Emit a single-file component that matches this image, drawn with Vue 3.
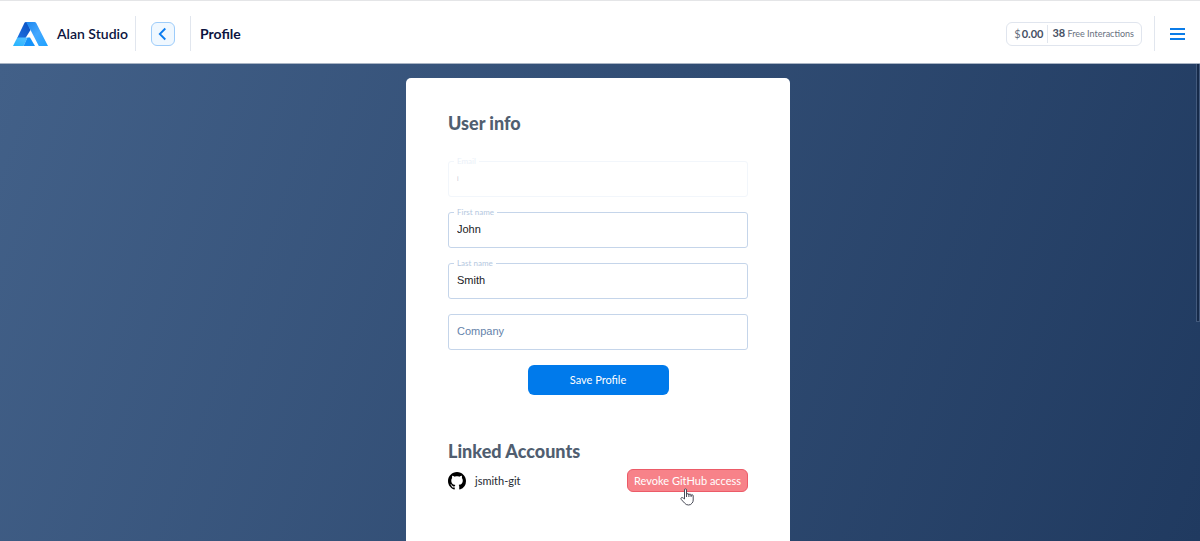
<script setup>
import { reactive } from 'vue'

const fields = reactive([
  { id: 'email', label: 'Email', value: 'i', disabled: true },
  { id: 'first-name', label: 'First name', value: 'John' },
  { id: 'last-name', label: 'Last name', value: 'Smith' },
  { id: 'company', label: 'Company', value: '' },
])
</script>

<template>
  <div class="page">
    <header class="topbar">
      <a class="brand" href="#">
        <svg class="logo" viewBox="0 0 35 24" aria-hidden="true">
          <defs>
            <linearGradient id="logo-left" x1="0" y1="1" x2="1" y2="0">
              <stop offset="0" stop-color="#1b6fe0" />
              <stop offset="1" stop-color="#0b4fc0" />
            </linearGradient>
            <linearGradient id="logo-right" x1="0" y1="0" x2="1" y2="1">
              <stop offset="0" stop-color="#1c86ee" />
              <stop offset="0.5" stop-color="#44a8ff" />
              <stop offset="1" stop-color="#1ea2ff" />
            </linearGradient>
            <linearGradient id="logo-foot" x1="0" y1="1" x2="1" y2="0">
              <stop offset="0" stop-color="#22b4ff" />
              <stop offset="1" stop-color="#58c0ff" />
            </linearGradient>
          </defs>
          <path d="M11.5 .8Q12 0 13 0H14L17.5 8L12.5 16H4.2Z" fill="url(#logo-left)" />
          <path d="M13 0H21.5Q22.6 0 23.2 1L35 24H25.8L17.5 8Z" fill="url(#logo-right)" />
          <path d="M4.3 15.5H14.5L10.5 24H0Z" fill="url(#logo-foot)" />
          <path d="M14.5 15.5H17L22 24H10.5Z" fill="#1592fa" />
        </svg>
        <span>Alan Studio</span>
      </a>
      <span class="rule"></span>
      <button class="back" type="button" aria-label="Back">
        <svg viewBox="0 0 24 24" aria-hidden="true"><path d="M14.5 6L8.500 12l6 6" /></svg>
      </button>
      <span class="rule"></span>
      <h1>Profile</h1>
      <div class="balance">
        <span class="money"><span>$</span><b>0.00</b></span>
        <span class="free"><b>38</b> Free Interactions</span>
      </div>
      <span class="rule"></span>
      <button class="menu" type="button" aria-label="Menu">
        <svg viewBox="0 0 16 14" aria-hidden="true"><path d="M0 2H15M0 7H15M0 12H15" /></svg>
      </button>
    </header>

    <main>
      <section class="card">
        <h2>User info</h2>
        <form @submit.prevent>
          <div v-for="f in fields" :key="f.id" class="field" :class="{ off: f.disabled, filled: f.value }">
            <input :id="f.id" v-model="f.value" type="text" :disabled="f.disabled" />
            <label :for="f.id">{{ f.label }}</label>
          </div>
          <button class="save" type="submit">Save Profile</button>
        </form>
        <h2>Linked Accounts</h2>
        <div class="account">
          <svg class="github" viewBox="0 0 16 16" aria-hidden="true">
            <path d="M8 0C3.580 0 0 3.580 0 8c0 3.540 2.290 6.530 5.470 7.590.4.070.55-.17.55-.38 0-.19-.01-.82-.01-1.490-2.010.37-2.530-.49-2.690-.94-.09-.23-.48-.94-.82-1.130-.28-.15-.68-.52-.01-.53.63-.01 1.080.58 1.230.82.72 1.210 1.870.87 2.330.66.07-.52.28-.87.51-1.070-1.780-.2-3.640-.89-3.640-3.950 0-.87.31-1.590.82-2.150-.08-.2-.36-1.020.08-2.120 0 0 .67-.21 2.200.82.64-.18 1.320-.27 2-.27s1.360.09 2 .27c1.530-1.040 2.200-.82 2.200-.82.44 1.100.16 1.920.08 2.120.51.56.82 1.270.82 2.150 0 3.070-1.870 3.750-3.650 3.950.29.25.54.73.54 1.480 0 1.070-.01 1.930-.01 2.200 0 .21.15.46.55.38A8.010 8.010 0 0 0 16 8c0-4.420-3.580-8-8-8Z" />
          </svg>
          <span>jsmith-git</span>
          <div class="revoke-wrap">
            <button class="revoke" type="button">Revoke GitHub access</button>
            <svg class="pointer" viewBox="0 0 14 18" aria-hidden="true">
              <path d="M4.500 11V2Q4.500 .8 5.500 .8T6.500 2V7Q6.800 5.500 7.800 5.500T8.900 7Q9.100 6 10 6T11.100 7.500Q11.300 6.700 12.200 6.700Q13.200 6.800 13.200 8V12Q13.200 14 12.200 15Q11 17 8.500 17Q6 17 4.500 15L1.300 11.500Q.5 10.300 1.400 9.700Q2.400 9.200 3.300 10.100Z" />
              <path d="M6.500 6.500V9M8.900 6.500V9M11.100 7V9" />
            </svg>
          </div>
        </div>
      </section>
      <span class="scroll-thumb"></span>
    </main>
  </div>
</template>

<style>
html,
body {
  margin: 0;
}
</style>

<style scoped>
* {
  box-sizing: border-box;
}
.page {
  display: flex;
  flex-direction: column;
  height: 100vh;
  overflow: hidden;
  font-family: Lato, 'Liberation Sans', sans-serif;
  color: #0c1440;
}
button,
input {
  font: inherit;
  margin: 0;
}
button {
  cursor: pointer;
}
.topbar {
  display: flex;
  flex: none;
  align-items: center;
  height: 64px;
  padding: 3px 14px 0 13px;
  border-top: 1px solid #e4e5e7;
  border-bottom: 1px solid #a9b4c4;
  background: #fff;
}
.brand {
  display: flex;
  align-items: center;
  gap: 9px;
  margin-right: 7px;
  color: inherit;
  font-size: 14px;
  font-weight: 600;
  text-decoration: none;
}
.logo {
  width: 35px;
  height: 24px;
}
.rule {
  width: 1px;
  height: 35px;
  background: #e1e6ee;
}
.back {
  display: flex;
  width: 24px;
  height: 24px;
  margin: 0 15px;
  padding: 0;
  border: 1px solid #9dccfa;
  border-radius: 6px;
  background: #f0f8ff;
}
.back svg {
  width: 100%;
  height: 100%;
  fill: none;
  stroke: #0b7cf0;
  stroke-width: 2;
}
h1 {
  margin: 0 auto 0 9px;
  font-size: 14px;
  font-weight: 700;
}
.balance {
  display: flex;
  align-items: center;
  height: 24px;
  margin-right: 12px;
  padding: 0 7px;
  border: 1px solid #e0e5ee;
  border-radius: 6px;
  color: #687080;
  font-size: 9px;
  line-height: 18px;
}
.balance b {
  color: #465064;
  font-size: 11px;
  font-weight: 700;
}
.money {
  display: flex;
  gap: 1px;
  padding-right: 4px;
  border-right: 1px solid #e1e6ee;
  font-size: 11px;
}
.free {
  padding: 0 0 1px 4px;
}
.menu {
  display: flex;
  margin-left: 15px;
  padding: 0;
  border: 0;
  background: none;
}
.menu svg {
  width: 16px;
  height: 14px;
  stroke: #0b7ce8;
  stroke-width: 2;
}
main {
  position: relative;
  display: flex;
  flex: 1;
  justify-content: center;
  min-height: 0;
  padding: 14px 4px 0 0;
  background: linear-gradient(110deg, #426088, #203a60);
}
.card {
  width: 384px;
  padding: 33px 42px 0;
  border-radius: 5px 5px 0 0;
  background: #fff;
}
h2 {
  margin: 0;
  color: #505e70;
  font-size: 18px;
  font-weight: 900;
  line-height: 24px;
}
form {
  display: flex;
  flex-direction: column;
  gap: 15px;
  margin: 26px 0 44px;
}
.field {
  position: relative;
  height: 36px;
}
.field input {
  width: 100%;
  height: 100%;
  padding: 0 8px 2px;
  border: 1px solid #c5d5ea;
  border-radius: 3px;
  outline: 0;
  background: #fff;
  color: #202124;
  font-family: 'Liberation Sans', Arial, sans-serif;
  font-size: 11px;
}
.field label {
  position: absolute;
  top: 10px;
  left: 9px;
  color: #6482aa;
  font-family: 'Liberation Sans', Arial, sans-serif;
  font-size: 11px;
  line-height: 14px;
}
.filled label {
  top: -5px;
  left: 6px;
  padding: 0 3px;
  background: #fff;
  color: #b4c7e0;
  font-family: Lato, sans-serif;
  font-size: 8px;
  line-height: 10px;
}
.field.off input {
  border-color: #f2f6fb;
  color: #c9cdd4;
  font-size: 7px;
}
.field.off label {
  color: #eaf0f8;
}
.save {
  align-self: center;
  width: 141px;
  height: 30px;
  padding: 0 0 1px;
  border: 0;
  border-radius: 6px;
  background: #007aeb;
  color: #fff;
  font-size: 11px;
}
.account {
  display: flex;
  align-items: center;
  gap: 9px;
  margin-top: 6px;
  color: #242830;
  font-size: 11px;
}
.github {
  width: 18px;
  height: 18px;
}
.revoke-wrap {
  position: relative;
  margin-left: auto;
}
.revoke {
  display: block;
  height: 23px;
  padding: 0 6px 1px;
  border: 1px solid #ec5b68;
  border-radius: 6px;
  background: #f78289;
  color: #fff;
  font-size: 11px;
}
.pointer {
  position: absolute;
  top: 19px;
  left: 53px;
  width: 14px;
  height: 18px;
  fill: #fff;
  stroke: #4a4c58;
  stroke-width: 1;
  pointer-events: none;
}
.scroll-thumb {
  position: absolute;
  top: 0;
  right: 0;
  width: 4px;
  height: 54%;
  border: 1px solid #42597c;
  border-top: 0;
  background: #162a49;
}
</style>
